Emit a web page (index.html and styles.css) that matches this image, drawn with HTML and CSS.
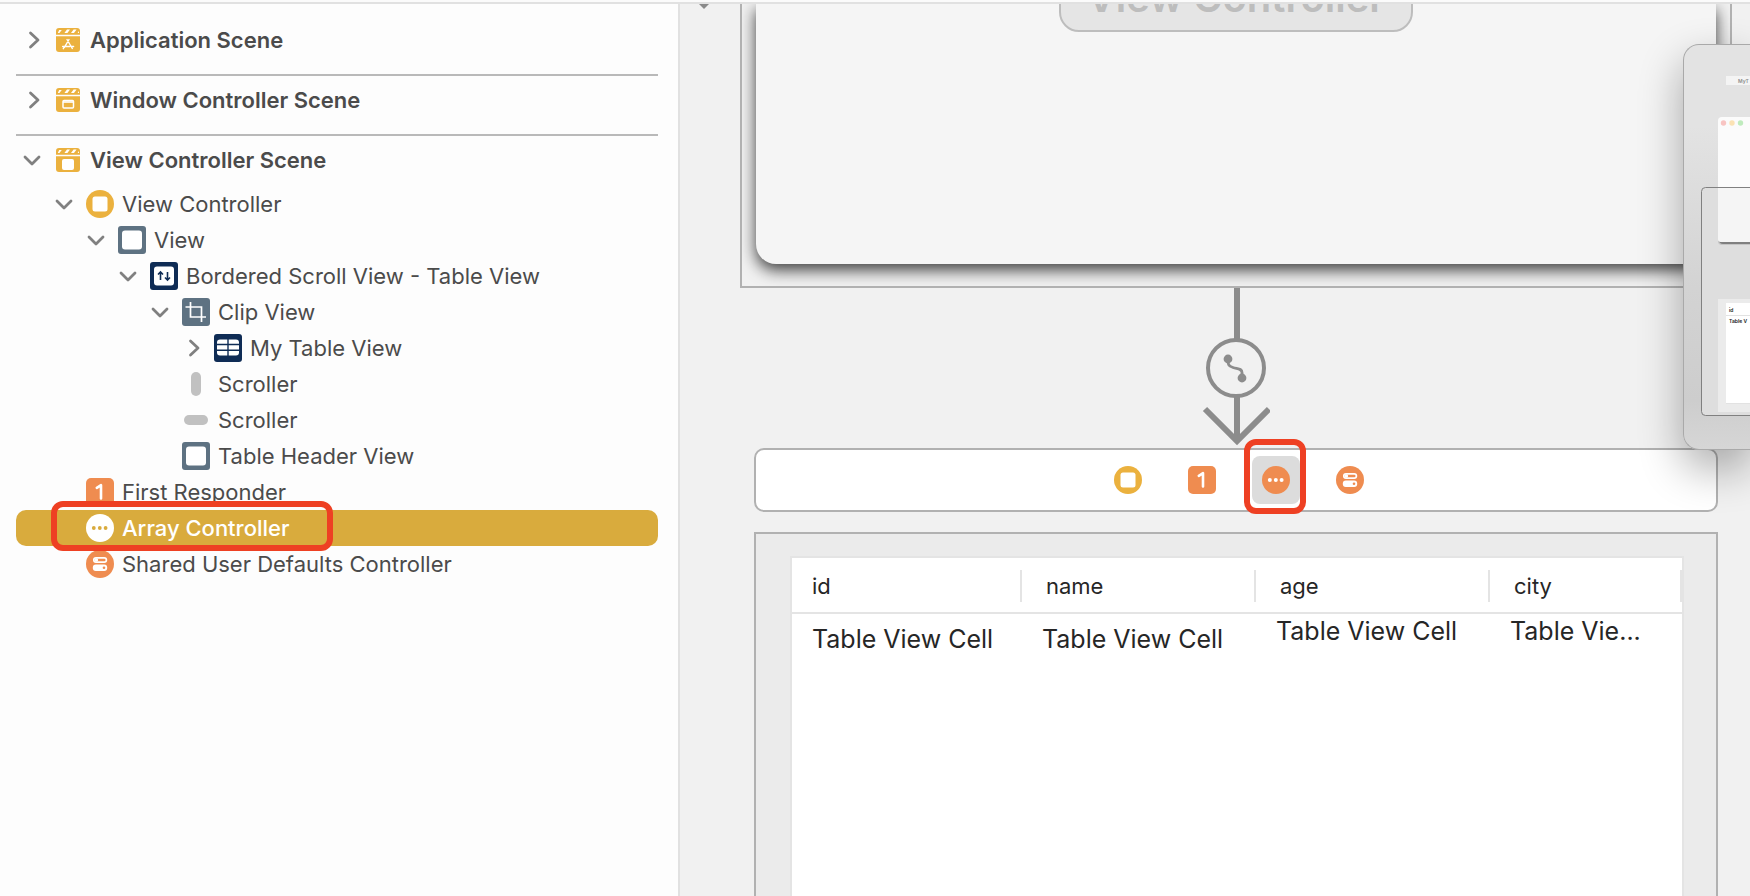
FILE: index.html
```html
<!DOCTYPE html>
<html lang="en">
<head>
<meta charset="utf-8">
<title>Storyboard Editor</title>
<link rel="stylesheet" href="styles.css">
</head>
<body>
<svg class="defs" width="0" height="0" aria-hidden="true">
  <symbol id="right" viewBox="0 0 32 36"><path d="M14.500 11l7.500 7-7.500 7" fill="none" stroke="#808080" stroke-width="2.800" stroke-linecap="round" stroke-linejoin="round"/></symbol>
  <symbol id="down" viewBox="0 0 32 36"><path d="M9 15l7 7 7-7" fill="none" stroke="#808080" stroke-width="2.800" stroke-linecap="round" stroke-linejoin="round"/></symbol>
  <symbol id="clapper" viewBox="0 0 28 28">
    <path d="M2 8.800V5a3 3 0 0 1 3-3h18a3 3 0 0 1 3 3v3.800z" fill="#ebb13e"/>
    <path d="M3.800 7l1.400-3h2.600l-2.400 3zM10.400 7l2.600-3.400h3L13.400 7zM17 7l2.600-3.400h3L20 7zM23.600 7l1.400-2v2z" fill="#fff"/>
    <path d="M2 10.200h24V23a3 3 0 0 1-3 3H5a3 3 0 0 1-3-3z" fill="#ebb13e"/>
  </symbol>
  <symbol id="scene-app" viewBox="0 0 28 28"><use href="#clapper"/><path d="M13 13.500l5.300 9M15 13.500l-4.600 7.800M8.600 20.500h7.200M17.600 20.500h2M10 21.500l-.7 1.200" stroke="#fff" stroke-width="1.400" fill="none" stroke-linecap="round"/></symbol>
  <symbol id="scene-window" viewBox="0 0 28 28"><use href="#clapper"/><rect x="9" y="14.500" width="10.500" height="7.500" rx="1" fill="none" stroke="#fff" stroke-width="1.500"/><path d="M9 16h10.500" stroke="#fff" stroke-width="1.600"/></symbol>
  <symbol id="scene-view" viewBox="0 0 28 28"><use href="#clapper"/><rect x="8" y="13" width="12" height="11" rx="2" fill="#fff"/></symbol>
  <symbol id="controller" viewBox="0 0 28 28"><circle cx="14" cy="14" r="14" fill="#ebb13e"/><rect x="6.500" y="6.500" width="15" height="15" rx="2.500" fill="#fff"/></symbol>
  <symbol id="view" viewBox="0 0 28 28"><rect width="28" height="28" rx="3" fill="#5e7282"/><rect x="4" y="4.500" width="20" height="19" rx="3" fill="#fff"/></symbol>
  <symbol id="scroll" viewBox="0 0 28 28"><rect width="28" height="28" rx="3" fill="#0f2c55"/><rect x="4" y="4.500" width="20" height="19" rx="3" fill="#fff"/><path d="M10.500 18V10.500M8 12.500l2.500-2.500 2.500 2.500M17.500 10v7.500M15 15.500l2.500 2.500 2.500-2.500" fill="none" stroke="#0f2c55" stroke-width="1.600"/></symbol>
  <symbol id="clip" viewBox="0 0 28 28"><rect width="28" height="28" rx="3" fill="#5e7282"/><path d="M3.500 9H19.500V24M8.500 4v15H24" fill="none" stroke="#fff" stroke-width="1.700"/></symbol>
  <symbol id="table" viewBox="0 0 28 28"><rect width="28" height="28" rx="3" fill="#0f2c55"/><rect x="3" y="5.500" width="22" height="16" rx="3" fill="#fff"/><path d="M14 5v17M3 10.500h22M3 16.200h22" stroke="#0f2c55" stroke-width="1.400"/></symbol>
  <symbol id="vbar" viewBox="0 0 28 28"><rect x="9" y="2" width="10" height="24" rx="5" fill="#c1c1c1"/></symbol>
  <symbol id="hbar" viewBox="0 0 28 28"><rect x="2" y="9" width="24" height="10" rx="5" fill="#c1c1c1"/></symbol>
  <symbol id="first" viewBox="0 0 28 28"><rect width="28" height="28" rx="5" fill="#ef8c50"/><path d="M10.800 9.800L15 7.200V20.500" fill="none" stroke="#fff" stroke-width="2.600" stroke-linecap="round" stroke-linejoin="round"/></symbol>
  <symbol id="array-white" viewBox="0 0 28 28"><circle cx="14" cy="14" r="14" fill="#fff"/><g fill="#d9ab3d"><circle cx="7.800" cy="14" r="1.900"/><circle cx="13.800" cy="14" r="1.900"/><circle cx="19.600" cy="14" r="1.900"/></g></symbol>
  <symbol id="array" viewBox="0 0 28 28"><circle cx="14" cy="14" r="14" fill="#ef8c50"/><g fill="#fff"><circle cx="7.800" cy="14" r="2"/><circle cx="13.800" cy="14" r="2"/><circle cx="19.600" cy="14" r="2"/></g></symbol>
  <symbol id="defaults" viewBox="0 0 28 28"><circle cx="14" cy="14" r="14" fill="#ef8c50"/><rect x="7.800" y="7.800" width="12.600" height="4.400" rx="2.200" fill="none" stroke="#fff" stroke-width="1.700"/><circle cx="10.400" cy="10" r="1.800" fill="#fff"/><rect x="6.800" y="14.600" width="14.400" height="6.400" rx="3" fill="#fff"/><circle cx="18" cy="17.800" r="1.300" fill="#ef8c50"/></symbol>
</svg>

<div class="app">
  <aside class="outline">
    <section class="scene">
      <h2 class="row heading"><button class="toggle" aria-label="Expand"><svg><use href="#right"/></svg></button><svg class="icon"><use href="#scene-app"/></svg><span>Application Scene</span></h2>
    </section>
    <section class="scene">
      <h2 class="row heading"><button class="toggle" aria-label="Expand"><svg><use href="#right"/></svg></button><svg class="icon"><use href="#scene-window"/></svg><span>Window Controller Scene</span></h2>
    </section>
    <section class="scene">
      <h2 class="row heading"><button class="toggle" aria-label="Collapse"><svg><use href="#down"/></svg></button><svg class="icon"><use href="#scene-view"/></svg><span>View Controller Scene</span></h2>
      <ul class="tree">
        <li class="row level-1"><button class="toggle" aria-label="Collapse"><svg><use href="#down"/></svg></button><svg class="icon"><use href="#controller"/></svg><span>View Controller</span></li>
        <li class="row level-2"><button class="toggle" aria-label="Collapse"><svg><use href="#down"/></svg></button><svg class="icon"><use href="#view"/></svg><span>View</span></li>
        <li class="row level-3"><button class="toggle" aria-label="Collapse"><svg><use href="#down"/></svg></button><svg class="icon"><use href="#scroll"/></svg><span>Bordered Scroll View - Table View</span></li>
        <li class="row level-4"><button class="toggle" aria-label="Collapse"><svg><use href="#down"/></svg></button><svg class="icon"><use href="#clip"/></svg><span>Clip View</span></li>
        <li class="row level-5"><button class="toggle" aria-label="Expand"><svg><use href="#right"/></svg></button><svg class="icon"><use href="#table"/></svg><span>My Table View</span></li>
        <li class="row level-4 leaf"><svg class="icon"><use href="#vbar"/></svg><span>Scroller</span></li>
        <li class="row level-4 leaf"><svg class="icon"><use href="#hbar"/></svg><span>Scroller</span></li>
        <li class="row level-4 leaf"><svg class="icon"><use href="#view"/></svg><span>Table Header View</span></li>
        <li class="row level-1 leaf"><svg class="icon"><use href="#first"/></svg><span>First Responder</span></li>
        <li class="row level-1 leaf selected"><svg class="icon"><use href="#array-white"/></svg><span>Array Controller</span><i class="mark mark-row"></i></li>
        <li class="row level-1 leaf"><svg class="icon"><use href="#defaults"/></svg><span>Shared User Defaults Controller</span></li>
      </ul>
    </section>
  </aside>

  <main class="canvas">
    <svg class="entry" viewBox="0 0 10 5"><path d="M0 0h10L5 5z" fill="#8a8a8a"/></svg>
    <div class="frame">
      <div class="window"><div class="placeholder">View Controller</div></div>
    </div>
    <svg class="segue" viewBox="0 0 68 160">
      <path d="M35 0v52M35 108v44" stroke="#8c8c8c" stroke-width="6"/>
      <circle cx="34" cy="80" r="28" fill="#f1f1f1" stroke="#8c8c8c" stroke-width="4"/>
      <path d="M3 121l32 32 32-32" fill="none" stroke="#8c8c8c" stroke-width="6"/>
      <path d="M26 71c0 5 0 7 5 8.500s9 1 9 5V90" fill="none" stroke="#8c8c8c" stroke-width="2.800"/>
      <circle cx="26" cy="71" r="4.400" fill="#8c8c8c"/><circle cx="40" cy="90" r="4.400" fill="#8c8c8c"/>
    </svg>
    <div class="dock">
      <button class="object" aria-label="View Controller"><svg class="icon"><use href="#controller"/></svg></button>
      <button class="object" aria-label="First Responder"><svg class="icon"><use href="#first"/></svg></button>
      <button class="object current" aria-label="Array Controller"><svg class="icon"><use href="#array"/></svg><i class="mark mark-object"></i></button>
      <button class="object" aria-label="Shared User Defaults Controller"><svg class="icon"><use href="#defaults"/></svg></button>
    </div>
    <div class="content">
      <div class="table-box">
        <table class="data">
          <colgroup><col class="c-first"><col class="c-mid"><col class="c-mid"><col class="c-last"></colgroup>
          <thead><tr><th><span>id</span></th><th><span>name</span></th><th><span>age</span></th><th><span>city</span></th></tr></thead>
          <tbody><tr><td class="low">Table View Cell</td><td class="low">Table View Cell</td><td>Table View Cell</td><td>Table Vie...</td></tr></tbody>
        </table>
      </div>
    </div>
    <div class="minimap">
      <svg viewBox="0 0 66 404" width="66" height="404">
        <rect x="42" y="31" width="40" height="9" fill="#f4f4f4"/>
        <text x="54" y="38" class="tiny pale">MyT</text>
        <rect x="18" y="142" width="80" height="228" rx="4" fill="#dedede"/>
        <rect x="35" y="140" width="60" height="59" rx="4" fill="#555"/>
        <rect x="34" y="141" width="60" height="59" rx="4" fill="#aaa" opacity=".5"/>
        <rect x="34" y="72" width="60" height="125" rx="4" fill="#fbfbfb"/>
        <path d="M34 142h50v55H37a3 3 0 0 1-3-3z" fill="#f5f5f5"/>
        <circle cx="39.500" cy="78" r="2.700" fill="#f8c4c2"/><circle cx="48" cy="78" r="2.700" fill="#fbe2b4"/><circle cx="56.500" cy="78" r="2.700" fill="#bfebbd"/>
        <rect x="34" y="254" width="50" height="113" fill="#ebebeb"/>
        <rect x="42" y="258" width="50" height="101" fill="#fff"/>
        <path d="M42 270.500h30M42 358.500h30" stroke="#e2e2e2"/>
        <text x="45" y="267" class="tiny">id</text>
        <text x="45" y="278" class="tiny">Table V</text>
        <rect x="17.500" y="142.500" width="80" height="228" rx="4" fill="none" stroke="#808080"/>
      </svg>
    </div>
  </main>
</div>
</body>
</html>
```
FILE: styles.css
```css
* { box-sizing: border-box; }

body {
  margin: 0;
  font-family: Inter, "Liberation Sans", sans-serif;
  font-size: 22px;
  color: #4b4b4b;
  background: #fdfdfd;
}

button {
  padding: 0;
  border: 0;
  background: none;
  font: inherit;
}

.defs { position: absolute; }

.app {
  display: flex;
  height: 100vh;
  padding-top: 4px;
  overflow: hidden;
  background: linear-gradient(#fbfbfb 2px, #e1e1e1 2px, #e1e1e1 4px, #fdfdfd 4px);
}

.outline {
  flex: 0 0 680px;
  padding: 12px 20px 0 16px;
  border-right: 2px solid #e1e1e1;
}

.scene { padding-top: 6px; }

.scene + .scene { border-top: 2px solid #b9b9b9; }

.row {
  position: relative;
  display: flex;
  align-items: center;
  height: 36px;
  line-height: 36px;
  white-space: nowrap;
}

.heading {
  margin: 0 0 16px;
  font-size: 22px;
  font-weight: 600;
}

.toggle {
  width: 32px;
  height: 36px;
}

.toggle svg {
  display: block;
  width: 32px;
  height: 36px;
}

.icon {
  flex: none;
  display: block;
  width: 28px;
  height: 28px;
}

.row .icon { margin: 0 8px 0 6px; }

.tree {
  margin: -8px 0 0;
  padding: 0;
  list-style: none;
}

.level-1 { padding-left: 32px; }
.level-2 { padding-left: 64px; }
.level-3 { padding-left: 96px; }
.level-4 { padding-left: 128px; }
.level-5 { padding-left: 160px; }
.level-1.leaf { padding-left: 64px; }
.level-4.leaf { padding-left: 160px; }

.selected {
  z-index: 1;
  border-radius: 10px;
  background: #d9ab3d;
  color: #fff;
  font-weight: 500;
}

.mark {
  position: absolute;
  border: 6px solid #ee4023;
  border-radius: 12px;
}

.mark-row {
  top: -9px;
  left: 35px;
  width: 282px;
  height: 50px;
}

.canvas {
  position: relative;
  flex: 1;
  display: flex;
  flex-direction: column;
  min-width: 0;
  overflow: hidden;
  background: #f1f1f1;
}

.entry {
  position: absolute;
  top: 0;
  left: 19px;
  width: 10px;
  height: 5px;
}

.frame {
  flex: none;
  margin: 0 18px 0 60px;
  padding: 0 14px 22px;
  border: 2px solid #b1b1b1;
  border-top: 0;
  overflow: hidden;
}

.window {
  display: flex;
  justify-content: center;
  height: 260px;
  border-radius: 0 0 20px 20px;
  background: #f5f5f5;
  box-shadow: 0 6px 16px rgba(0, 0, 0, 0.75);
}

.placeholder {
  height: 72px;
  margin-top: -44px;
  padding: 0 26px;
  border: 2px solid #bdbdbd;
  border-radius: 20px;
  background: #e5e5e5;
  color: #bdbdbd;
  font-size: 40px;
  font-weight: 600;
  line-height: 72px;
}

.segue {
  flex: none;
  align-self: center;
  width: 68px;
  height: 160px;
  margin-left: 42px;
}

.dock {
  flex: none;
  display: flex;
  align-items: center;
  justify-content: center;
  gap: 26px;
  height: 64px;
  margin: 0 32px 20px 74px;
  padding-left: 6px;
  border: 2px solid #b1b1b1;
  border-radius: 10px;
  background: #fff;
}

.object {
  position: relative;
  display: grid;
  place-items: center;
  width: 48px;
  height: 48px;
  border-radius: 8px;
}

.current { background: #dcdcdc; }

.mark-object {
  top: -17px;
  left: -8px;
  width: 62px;
  height: 75px;
}

.content {
  flex: 1;
  display: flex;
  margin: 0 32px 0 74px;
  padding: 22px 32px 0 34px;
  border: 2px solid #b1b1b1;
  border-bottom: 0;
  background: #ebebeb;
}

.table-box {
  flex: 1;
  min-width: 0;
  border: 2px solid #e4e4e4;
  border-bottom: 0;
  background: #fff;
}

.data {
  width: 100%;
  border-collapse: separate;
  border-spacing: 0;
  table-layout: fixed;
  color: #262626;
}

.c-first { width: 230px; }
.c-mid { width: 234px; }

.data th {
  padding: 12px 0 10px;
  border-bottom: 2px solid #e4e4e4;
  font-weight: 400;
  text-align: left;
}

.data th span {
  display: block;
  padding-left: 24px;
  border-right: 2px solid #e4e4e4;
  line-height: 32px;
}

.data th:first-child span { padding-left: 20px; }

.data td {
  padding: 0 0 0 20px;
  font-size: 25px;
  line-height: 34px;
  vertical-align: top;
  white-space: nowrap;
}

.data .low { padding-top: 8px; }

.minimap {
  position: absolute;
  top: 40px;
  right: 0;
  width: 67px;
  height: 406px;
  border: 1px solid #a9a9a9;
  border-right: 0;
  border-radius: 16px 0 0 16px;
  background: linear-gradient(#e3e3e3 20%, #d3d3d3 60%, #cdcdcd 88%, #d6d6d6);
  box-shadow: 0 18px 44px rgba(0, 0, 0, 0.33);
  overflow: hidden;
}

.minimap svg { display: block; }

.tiny {
  font-size: 5px;
  font-weight: 600;
  fill: #222;
}

.pale { fill: #8c8c8c; }
```
